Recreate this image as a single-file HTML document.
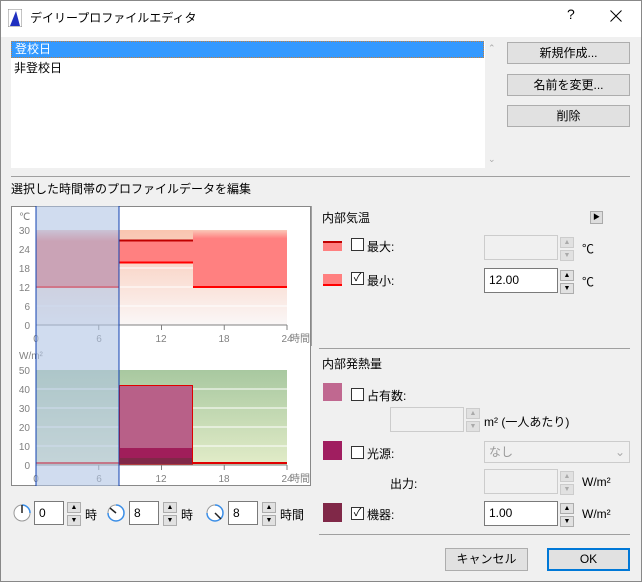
<!DOCTYPE html><html><head><meta charset="utf-8"><style>
*{box-sizing:border-box;margin:0;padding:0}
body{width:642px;height:582px;background:#f0f0f0;font-family:"Liberation Sans","Noto Sans CJK JP",sans-serif;font-size:12px;color:#000;position:relative;overflow:hidden}
.a{position:absolute}
.btn{position:absolute;background:#e1e1e1;border:1px solid #adadad;text-align:center;line-height:20px}
.inp{position:absolute;background:#fff;border:1px solid #7a7a7a;padding-left:4px;line-height:22px}
.dis{background:#f0f0f0;border:1px solid #ccc}
.spin{position:absolute;width:14px}
.spin div{height:11px;border:1px solid #adadad;background:#e1e1e1;margin-bottom:2px;font-size:7px;text-align:center;line-height:9px}
.spin.d div{border-color:#ccc;color:#aaa}
.cb{position:absolute;width:13px;height:13px;border:1px solid #333;background:#fff}
.sw{position:absolute;width:19px}
</style></head><body>
<div class="a" style="left:0;top:0;width:642px;height:37px;background:#fff"></div>
<svg class="a" style="left:8px;top:9px" width="14" height="18"><rect x="0" y="0" width="14" height="18" fill="#fff" stroke="#888"/><path d="M2 17 L8 2 L12 17 Z" fill="#2030c0"/></svg>
<div class="a" style="left:30px;top:9px;font-size:12px">デイリープロファイルエディタ</div>
<div class="a" style="left:567px;top:6px;font-size:14px">?</div>
<svg class="a" style="left:610px;top:10px" width="12" height="12"><path d="M0.5 0.5 L11.5 11.5 M11.5 0.5 L0.5 11.5" stroke="#000" stroke-width="1"/></svg>
<div class="a" style="left:11px;top:41px;width:474px;height:127px;background:#fff"></div>
<div class="a" style="left:11px;top:41px;width:473px;height:17px;background:#3399ff;color:#fff;padding-left:3px;line-height:15px;border:1px dotted #c08040">登校日</div>
<div class="a" style="left:14px;top:60px;line-height:17px">非登校日</div>
<div class="a" style="left:488px;top:43px;color:#aaa;font-size:9px">⌃</div>
<div class="a" style="left:488px;top:154px;color:#aaa;font-size:9px">⌄</div>
<div class="btn" style="left:507px;top:42px;width:123px;height:22px">新規作成...</div>
<div class="btn" style="left:507px;top:74px;width:123px;height:22px">名前を変更...</div>
<div class="btn" style="left:507px;top:105px;width:123px;height:22px">削除</div>
<div class="a" style="left:11px;top:176px;width:619px;height:1px;background:#a0a0a0"></div>
<div class="a" style="left:11px;top:180px">選択した時間帯のプロファイルデータを編集</div>
<svg class="a" style="left:11px;top:206px" width="300" height="280" font-family="Liberation Sans" font-size="10" fill="#808080">
<defs>
<linearGradient id="pe" x1="0" y1="0" x2="0" y2="1"><stop offset="0" stop-color="#f9c5b0"/><stop offset="1" stop-color="#faf7f7"/></linearGradient>
<linearGradient id="rd" x1="0" y1="0" x2="0" y2="1"><stop offset="0" stop-color="#fac8b8"/><stop offset=".15" stop-color="#ff8080"/><stop offset="1" stop-color="#ff8080"/></linearGradient>
<linearGradient id="pu" x1="0" y1="0" x2="0" y2="1"><stop offset="0" stop-color="#f0c0c0"/><stop offset=".2" stop-color="#f07070"/><stop offset="1" stop-color="#f07070"/></linearGradient>
<linearGradient id="gr" x1="0" y1="0" x2="0" y2="1"><stop offset="0" stop-color="#a8c8a0"/><stop offset="1" stop-color="#e2ecc8"/></linearGradient>
</defs>
<rect x="0.5" y="0.5" width="299" height="279" fill="#fff" stroke="#888"/>
<rect x="25" y="24" width="251" height="95" fill="url(#pe)"/>
<g stroke="#fff"><line x1="25" y1="43" x2="276" y2="43"/><line x1="25" y1="62" x2="276" y2="62"/><line x1="25" y1="81" x2="276" y2="81"/><line x1="25" y1="100" x2="276" y2="100"/></g>
<rect x="108" y="34" width="74" height="23" fill="#ff8080"/>
<rect x="182" y="24" width="94" height="57" fill="url(#rd)"/>
<rect x="25" y="24" width="83" height="57" fill="url(#pu)"/>
<line x1="108" y1="34.5" x2="182" y2="34.5" stroke="#c00000" stroke-width="2"/>
<line x1="108" y1="56.5" x2="182" y2="56.5" stroke="#ff0000" stroke-width="2"/>
<line x1="25" y1="81" x2="108" y2="81" stroke="#ff0000" stroke-width="2"/>
<line x1="182" y1="81" x2="276" y2="81" stroke="#ff0000" stroke-width="2"/>
<line x1="25" y1="119" x2="276" y2="119" stroke="#808080"/>
<g stroke="#808080"><line x1="25" y1="119" x2="25" y2="124"/><line x1="87.75" y1="119" x2="87.75" y2="124"/><line x1="150.5" y1="119" x2="150.5" y2="124"/><line x1="213.25" y1="119" x2="213.25" y2="124"/><line x1="276" y1="119" x2="276" y2="124"/></g>
<text x="8" y="14">℃</text>
<g text-anchor="end"><text x="19" y="28">30</text><text x="19" y="47">24</text><text x="19" y="66">18</text><text x="19" y="85">12</text><text x="19" y="104">6</text><text x="19" y="123">0</text></g>
<g text-anchor="middle"><text x="25" y="136">0</text><text x="88" y="136">6</text><text x="150" y="136">12</text><text x="213" y="136">18</text><text x="276" y="136">24</text></g><text x="279" y="136">時間</text>
<rect x="25" y="164" width="251" height="95" fill="url(#gr)"/>
<g stroke="#fff"><line x1="25" y1="183" x2="276" y2="183"/><line x1="25" y1="202" x2="276" y2="202"/><line x1="25" y1="221" x2="276" y2="221"/><line x1="25" y1="240" x2="276" y2="240"/></g>
<rect x="108" y="179" width="74" height="80" fill="#b86088"/>
<rect x="108" y="242" width="74" height="17" fill="#a01e5a"/>
<rect x="108" y="252" width="74" height="7" fill="#802848"/>
<rect x="108.5" y="179.5" width="73" height="79" fill="none" stroke="#e00000"/>
<line x1="25" y1="257" x2="108" y2="257" stroke="#e00000" stroke-width="2"/>
<line x1="182" y1="257" x2="276" y2="257" stroke="#e00000" stroke-width="2"/>
<line x1="25" y1="259" x2="276" y2="259" stroke="#808080"/>
<g stroke="#808080"><line x1="25" y1="259" x2="25" y2="264"/><line x1="87.75" y1="259" x2="87.75" y2="264"/><line x1="150.5" y1="259" x2="150.5" y2="264"/><line x1="213.25" y1="259" x2="213.25" y2="264"/><line x1="276" y1="259" x2="276" y2="264"/></g>
<text x="8" y="153">W/m²</text>
<g text-anchor="end"><text x="19" y="168">50</text><text x="19" y="187">40</text><text x="19" y="206">30</text><text x="19" y="225">20</text><text x="19" y="244">10</text><text x="19" y="263">0</text></g>
<g text-anchor="middle"><text x="25" y="276">0</text><text x="88" y="276">6</text><text x="150" y="276">12</text><text x="213" y="276">18</text><text x="276" y="276">24</text></g><text x="279" y="276">時間</text>
<rect x="25" y="0" width="83" height="280" fill="#b0c4e4" opacity=".6"/>
<line x1="25" y1="0" x2="25" y2="280" stroke="#1040b0"/><line x1="108" y1="0" x2="108" y2="280" stroke="#1040b0"/>
</svg>
<svg class="a" style="left:13px;top:504px" width="280" height="20">
<g fill="#fff" stroke="#999"><circle cx="9" cy="9" r="8"/><circle cx="103" cy="9" r="8"/><circle cx="202" cy="9" r="8"/></g>
<path d="M9 1 A8 8 0 0 1 17 9" fill="none" stroke="#3a8ee8" stroke-width="1.5"/><line x1="9" y1="9" x2="9" y2="1" stroke="#222" stroke-width="1.5"/>
<path d="M103 1 A8 8 0 1 1 95 9" fill="none" stroke="#3a8ee8" stroke-width="1.5"/><line x1="103" y1="9" x2="97" y2="4" stroke="#222" stroke-width="1.5"/>
<path d="M202 1 A8 8 0 1 1 194 9" fill="none" stroke="#3a8ee8" stroke-width="1.5"/><line x1="202" y1="9" x2="208" y2="15" stroke="#222" stroke-width="1.5"/>
</svg>
<div class="inp" style="left:34px;top:501px;width:30px;height:24px">0</div>
<div class="spin" style="left:67px;top:502px"><div>▲</div><div>▼</div></div>
<div class="a" style="left:85px;top:506px">時</div>
<div class="inp" style="left:129px;top:501px;width:30px;height:24px">8</div>
<div class="spin" style="left:163px;top:502px"><div>▲</div><div>▼</div></div>
<div class="a" style="left:181px;top:506px">時</div>
<div class="inp" style="left:228px;top:501px;width:30px;height:24px">8</div>
<div class="spin" style="left:262px;top:502px"><div>▲</div><div>▼</div></div>
<div class="a" style="left:280px;top:506px">時間</div>
<div class="a" style="left:311px;top:206px;width:1px;height:140px;background:#a0a0a0"></div>
<div class="a" style="left:322px;top:209px">内部気温</div>
<div class="a" style="left:590px;top:211px;width:13px;height:13px;background:#ddd;border:1px solid #aaa;font-size:7px;text-align:center;line-height:11px">▶</div>
<div class="sw" style="left:323px;top:241px;height:10px;background:#ff8080;border-top:2px solid #c00000"></div>
<div class="cb" style="left:351px;top:238px"></div><div class="a" style="left:367px;top:238px">最大:</div>
<div class="inp dis" style="left:484px;top:235px;width:74px;height:25px"></div>
<div class="spin d" style="left:560px;top:237px"><div>▲</div><div>▼</div></div><div class="a" style="left:582px;top:240px">℃</div>
<div class="sw" style="left:323px;top:274px;height:12px;background:#ff8080;border-bottom:2px solid #ff0000"></div>
<div class="cb" style="left:351px;top:272px;font-size:11px;line-height:11px;text-align:center">✓</div><div class="a" style="left:367px;top:272px">最小:</div>
<div class="inp" style="left:484px;top:268px;width:74px;height:25px">12.00</div>
<div class="spin" style="left:560px;top:270px"><div>▲</div><div>▼</div></div><div class="a" style="left:582px;top:273px">℃</div>
<div class="a" style="left:319px;top:348px;width:311px;height:1px;background:#a0a0a0"></div>
<div class="a" style="left:322px;top:355px">内部発熱量</div>
<div class="sw" style="left:323px;top:383px;height:18px;background:#c06890"></div>
<div class="cb" style="left:351px;top:388px"></div><div class="a" style="left:367px;top:387px">占有数:</div>
<div class="inp dis" style="left:390px;top:407px;width:74px;height:25px"></div>
<div class="spin d" style="left:466px;top:408px"><div>▲</div><div>▼</div></div><div class="a" style="left:484px;top:413px">m² (一人あたり)</div>
<div class="sw" style="left:323px;top:441px;height:19px;background:#a01e60"></div>
<div class="cb" style="left:351px;top:446px"></div><div class="a" style="left:367px;top:445px">光源:</div>
<div class="inp dis" style="left:484px;top:441px;width:146px;height:22px;color:#999;line-height:20px">なし<span style="position:absolute;right:4px;color:#aaa">⌄</span></div>
<div class="a" style="left:390px;top:475px">出力:</div>
<div class="inp dis" style="left:484px;top:469px;width:74px;height:25px"></div>
<div class="spin d" style="left:560px;top:471px"><div>▲</div><div>▼</div></div><div class="a" style="left:582px;top:475px">W/m²</div>
<div class="sw" style="left:323px;top:503px;height:19px;background:#802848"></div>
<div class="cb" style="left:351px;top:507px;font-size:11px;line-height:11px;text-align:center">✓</div><div class="a" style="left:367px;top:506px">機器:</div>
<div class="inp" style="left:484px;top:501px;width:74px;height:25px">1.00</div>
<div class="spin" style="left:560px;top:503px"><div>▲</div><div>▼</div></div><div class="a" style="left:582px;top:507px">W/m²</div>
<div class="a" style="left:319px;top:534px;width:311px;height:1px;background:#a0a0a0"></div>
<div class="btn" style="left:445px;top:548px;width:83px;height:23px">キャンセル</div>
<div class="btn" style="left:547px;top:548px;width:83px;height:23px;border:2px solid #0078d7;line-height:19px">OK</div>
<div class="a" style="left:0;top:0;width:642px;height:582px;border:1px solid #888"></div>
</body></html>
